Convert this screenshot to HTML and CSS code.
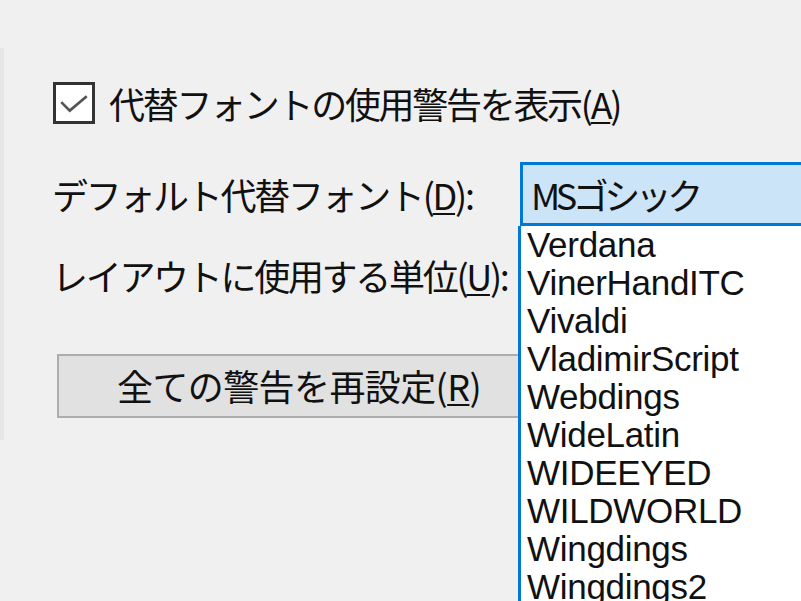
FILE: index.html
```html
<!DOCTYPE html>
<html lang="ja">
<head>
<meta charset="utf-8">
<link rel="stylesheet" href="styles.css">
</head>
<body>
<div class="page">
  <div class="group">
    <div class="row row-check">
      <span class="checkbox">
        <svg viewBox="0 0 40 40" width="34" height="34"><path d="M5 19 L15 29 L35 12" fill="none" stroke="#555" stroke-width="3.2"/></svg>
      </span>
      <span class="label">代替フォントの使用警告を表示(<u>A</u>)</span>
    </div>
    <div class="row row-combo">
      <span class="label label-fixed">デフォルト代替フォント(<u>D</u>):</span>
      <div class="combo"><span class="combo-text">MSゴシック</span></div>
    </div>
    <div class="row row-unit">
      <span class="label">レイアウトに使用する単位(<u>U</u>):</span>
    </div>
    <div class="row row-button">
      <div class="button">全ての警告を再設定(<u>R</u>)</div>
    </div>
  </div>
  <ul class="dropdown">
    <li>Verdana</li>
    <li>VinerHandITC</li>
    <li>Vivaldi</li>
    <li>VladimirScript</li>
    <li>Webdings</li>
    <li>WideLatin</li>
    <li>WIDEEYED</li>
    <li>WILDWORLD</li>
    <li>Wingdings</li>
    <li>Wingdings2</li>
  </ul>
</div>
</body>
</html>
```
FILE: styles.css
```css
html, body {
  margin: 0;
  padding: 0;
  background: #f0f0f0;
  overflow: hidden;
}
.page {
  position: relative;
  width: 801px;
  height: 601px;
  overflow: hidden;
  font-family: "Noto Sans CJK JP", "Noto Sans", sans-serif;
  color: #111;
}
.group {
  margin-top: 48px;
  margin-left: 0;
  height: 392px;
  border-left: 4px solid #e6e6e6;
  padding-top: 35px;
  box-sizing: border-box;
}
.row {
  display: flex;
  align-items: center;
}
.label {
  font-size: 36px;
  letter-spacing: -2.3px;
  line-height: 40px;
  white-space: nowrap;
}
.label u {
  text-decoration-thickness: 2px;
  text-underline-offset: 3px;
}
.row-check {
  height: 40px;
  padding-left: 49px;
  gap: 14px;
}
.checkbox {
  width: 42px;
  height: 42px;
  box-sizing: border-box;
  border: 3px solid #333;
  background: #fff;
  display: flex;
  align-items: center;
  justify-content: center;
}
.row-combo {
  margin-top: 39px;
  height: 64px;
  padding-left: 48px;
}
.label-fixed {
  width: 468px;
  flex: none;
}
.combo {
  flex: none;
  width: 320px;
  height: 64px;
  box-sizing: border-box;
  border: 3px solid #0078d7;
  background: #cce4f7;
  display: flex;
  align-items: center;
  padding-left: 8px;
}
.combo-text {
  font-size: 36px;
  letter-spacing: -4.5px;
  line-height: 40px;
  white-space: nowrap;
}
.row-unit {
  margin-top: 29px;
  height: 40px;
  padding-left: 48px;
}
.row-button {
  margin-top: 59px;
  padding-left: 53px;
}
.button {
  width: 490px;
  height: 64px;
  box-sizing: border-box;
  border: 2px solid #adadad;
  background: #e1e1e1;
  font-size: 36px;
  letter-spacing: -0.6px;
  line-height: 58px;
  padding-left: 58px;
  white-space: nowrap;
}
.button u {
  text-decoration-thickness: 2px;
  text-underline-offset: 3px;
}
.dropdown {
  position: absolute;
  left: 518px;
  top: 226px;
  width: 300px;
  height: 400px;
  margin: 0;
  padding: 0 0 0 6px;
  list-style: none;
  background: #fff;
  border-left: 3px solid #0078d7;
  box-sizing: border-box;
  font-family: "Liberation Sans", Arial, sans-serif;
  font-size: 35px;
  letter-spacing: -0.3px;
  color: #111;
}
.dropdown li {
  height: 38px;
  line-height: 38px;
  white-space: nowrap;
}
```
